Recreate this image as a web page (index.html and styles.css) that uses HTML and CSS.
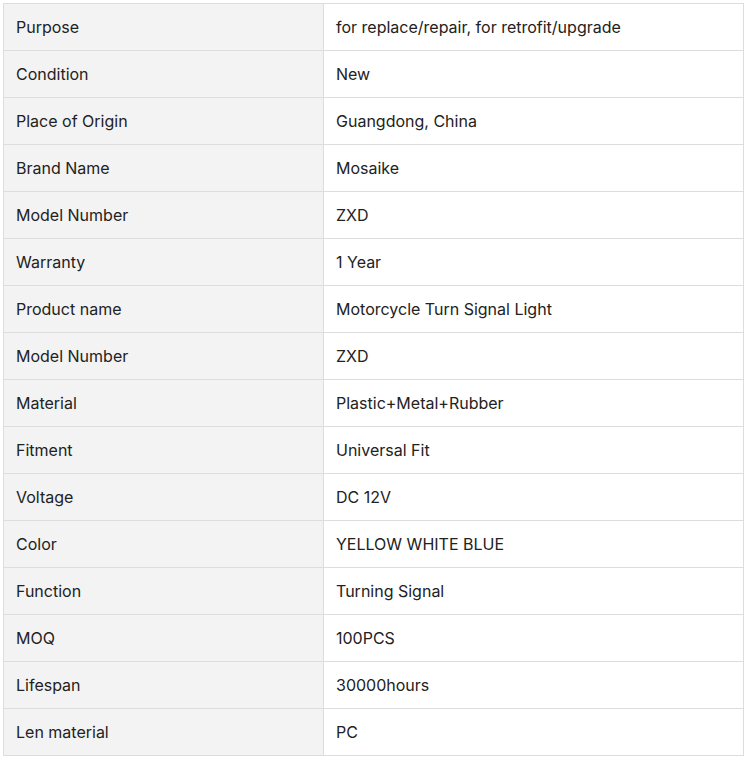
FILE: index.html
```html
<!DOCTYPE html>
<html>
<head>
<meta charset="utf-8">
<link rel="stylesheet" href="styles.css">
</head>
<body>
<table class="spec">
<colgroup><col class="c-label"><col class="c-value"></colgroup>
<tbody>
<tr><td class="label">Purpose</td><td>for replace/repair, for retrofit/upgrade</td></tr>
<tr><td class="label">Condition</td><td>New</td></tr>
<tr><td class="label">Place of Origin</td><td>Guangdong, China</td></tr>
<tr><td class="label">Brand Name</td><td>Mosaike</td></tr>
<tr><td class="label">Model Number</td><td>ZXD</td></tr>
<tr><td class="label">Warranty</td><td>1 Year</td></tr>
<tr><td class="label">Product name</td><td>Motorcycle Turn Signal Light</td></tr>
<tr><td class="label">Model Number</td><td>ZXD</td></tr>
<tr><td class="label">Material</td><td>Plastic+Metal+Rubber</td></tr>
<tr><td class="label">Fitment</td><td>Universal Fit</td></tr>
<tr><td class="label">Voltage</td><td>DC 12V</td></tr>
<tr><td class="label">Color</td><td>YELLOW WHITE BLUE</td></tr>
<tr><td class="label">Function</td><td>Turning Signal</td></tr>
<tr><td class="label">MOQ</td><td>100PCS</td></tr>
<tr><td class="label">Lifespan</td><td>30000hours</td></tr>
<tr><td class="label">Len material</td><td>PC</td></tr>
</tbody>
</table>
</body>
</html>
```
FILE: styles.css
```css
html, body {
  margin: 0;
  padding: 0;
  background: #ffffff;
}
body {
  padding: 3px;
  font-family: Inter, "Noto Sans", sans-serif;
  font-size: 16px;
  color: #222222;
}
.spec {
  border-collapse: collapse;
  width: 741px;
  table-layout: fixed;
}
.c-label { width: 320px; }
.spec td {
  border: 1px solid #dddddd;
  padding: 0 12px;
  height: 47px;
  box-sizing: border-box;
  vertical-align: middle;
  line-height: 20px;
}
.spec td.label {
  background: #f3f3f3;
}
```
